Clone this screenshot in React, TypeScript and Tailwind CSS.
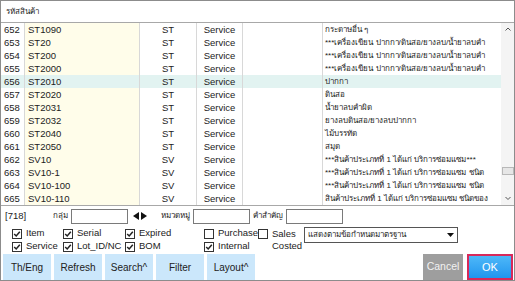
import React from 'react';

type Row = { no: string; code: string; cat: string; desc: string };

const rows: Row[] = [
  { no: '652', code: 'ST1090', cat: 'ST', desc: 'กระดาษอื่น ๆ' },
  { no: '653', code: 'ST20', cat: 'ST', desc: '***เครื่องเขียน ปากกา/ดินสอ/ยางลบ/น้ำยาลบคำ' },
  { no: '654', code: 'ST200', cat: 'ST', desc: '***เครื่องเขียน ปากกา/ดินสอ/ยางลบ/น้ำยาลบคำ' },
  { no: '655', code: 'ST2000', cat: 'ST', desc: '***เครื่องเขียน ปากกา/ดินสอ/ยางลบ/น้ำยาลบคำ' },
  { no: '656', code: 'ST2010', cat: 'ST', desc: 'ปากกา' },
  { no: '657', code: 'ST2020', cat: 'ST', desc: 'ดินสอ' },
  { no: '658', code: 'ST2031', cat: 'ST', desc: 'น้ำยาลบคำผิด' },
  { no: '659', code: 'ST2032', cat: 'ST', desc: 'ยางลบดินสอ/ยางลบปากกา' },
  { no: '660', code: 'ST2040', cat: 'ST', desc: 'ไม้บรรทัด' },
  { no: '661', code: 'ST2050', cat: 'ST', desc: 'สมุด' },
  { no: '662', code: 'SV10', cat: 'SV', desc: '***สินค้าประเภทที่ 1 ได้แก่  บริการซ่อมแซม***' },
  { no: '663', code: 'SV10-1', cat: 'SV', desc: '***สินค้าประเภทที่ 1 ได้แก่  บริการซ่อมแซม ชนิด' },
  { no: '664', code: 'SV10-100', cat: 'SV', desc: '***สินค้าประเภทที่ 1 ได้แก่  บริการซ่อมแซม ชนิด' },
  { no: '665', code: 'SV10-110', cat: 'SV', desc: 'สินค้าประเภทที่ 1 ได้แก่  บริการซ่อมแซม ชนิดของ' },
];

const Check = ({ on }: { on: boolean }) => (
  <svg width="10" height="10" viewBox="0 0 10 10" className="shrink-0">
    <rect x="0.5" y="0.5" width="9" height="9" fill="#fff" stroke="#333" />
    {on && <path d="M2.2 5 L4.2 7 L7.8 2.8" fill="none" stroke="#222" strokeWidth="1.5" />}
  </svg>
);

const Opt = ({ label, on, w }: { label: string; on: boolean; w: string }) => (
  <div className={`flex items-center gap-[4px] ${w}`}>
    <Check on={on} />
    <span>{label}</span>
  </div>
);

export default function App() {
  return (
    <div className="w-[515px] h-[281px] bg-white border border-[#8c8c8c] flex flex-col text-[9.5px] text-[#222] overflow-hidden" style={{ fontFamily: 'Tahoma, "Liberation Sans", "DejaVu Sans", sans-serif' }}>
      {/* header */}
      <div className="h-[22px] flex items-center px-[5px] border-b border-[#a8a8a8] text-[8px]">รหัสสินค้า</div>

      {/* grid */}
      <div className="h-[182px] flex">
        <div className="w-[500px]">
          {rows.map(r => (
            <div key={r.no} className={`h-[13px] flex leading-[13px] ${r.no === '656' ? 'bg-[#e2f3f1]' : ''}`}>
              <div className="w-[24px] pl-[3px] border-r border-[#d8d8d8]">{r.no}</div>
              <div className={`w-[115px] pl-[3px] border-r border-[#d8d8d8] ${r.no === '656' ? '' : 'bg-[#fffdea]'}`}>{r.code}</div>
              <div className="w-[57px] text-center border-r border-[#d8d8d8]">{r.cat}</div>
              <div className="w-[46px] text-center border-r border-[#d8d8d8]">Service</div>
              <div className="w-[80px] border-r border-[#d8d8d8]" />
              <div className="flex-1 pl-[2px] whitespace-nowrap overflow-hidden text-[8px]">{r.desc}</div>
            </div>
          ))}
        </div>
        <div className="flex-1 bg-[#f4f4f4] flex flex-col items-center text-[#555]">
          <svg width="8" height="13" viewBox="0 0 8 13"><path d="M1.5 7.5 L4 5 L6.5 7.5" fill="none" stroke="#555" strokeWidth="1" /></svg>
          <div className="flex-1" />
          <div className="w-[12px] h-[8px] bg-[#e6e6e6] border border-[#b8b8b8] mb-[17px]" />
          <svg width="8" height="13" viewBox="0 0 8 13"><path d="M1.5 5 L4 7.5 L6.5 5" fill="none" stroke="#555" strokeWidth="1" /></svg>
        </div>
      </div>

      {/* bottom panel */}
      <div className="flex-1 border-t border-[#a8a8a8] flex flex-col">
        <div className="h-[16px] mt-[2px] flex items-center">
          <span className="w-[52px] pl-[4px]">[718]</span>
          <span className="text-[8px] mr-[3px]">กลุ่ม</span>
          <div className="w-[57px] h-[15px] border border-[#7a7a7a] bg-white" />
          <div className="flex items-center gap-[2px] ml-[5px] w-[28px]">
            <svg width="6" height="8" viewBox="0 0 6 8"><path d="M6 0 L0 4 L6 8 Z" fill="#111" /></svg>
            <svg width="6" height="8" viewBox="0 0 6 8"><path d="M0 0 L6 4 L0 8 Z" fill="#111" /></svg>
          </div>
          <span className="text-[8px] mr-[3px]">หมวดหมู่</span>
          <div className="w-[57px] h-[15px] border border-[#7a7a7a] bg-white" />
          <span className="text-[8px] ml-[3px] mr-[3px]">คำสำคัญ</span>
          <div className="w-[57px] h-[15px] border border-[#7a7a7a] bg-white" />
        </div>

        <div className="flex mt-[4px]">
          <div className="flex flex-col pl-[11px] gap-[2px]">
            <div className="flex h-[11px] items-center">
              <Opt label="Item" on w="w-[51px]" />
              <Opt label="Serial" on w="w-[62px]" />
              <Opt label="Expired" on w="w-[79px]" />
              <Opt label="Purchase" on={false} w="w-[54px]" />
            </div>
            <div className="flex h-[11px] items-center">
              <Opt label="Service" on w="w-[51px]" />
              <Opt label="Lot_ID/NC" on w="w-[62px]" />
              <Opt label="BOM" on w="w-[79px]" />
              <Opt label="Internal" on w="w-[54px]" />
            </div>
          </div>
          <div className="flex gap-[4px]">
            <div className="pt-[1px]"><Check on={false} /></div>
            <div className="flex flex-col leading-[12px] w-[32px]">
              <span>Sales</span>
              <span>Costed</span>
            </div>
          </div>
          <div className="w-[154px] h-[16px] border border-[#555] bg-white flex items-center justify-between px-[3px] mt-[-1px]">
            <span className="text-[8px]">แสดงตามข้อกำหนดมาตรฐาน</span>
            <svg width="7" height="4" viewBox="0 0 7 4"><path d="M0 0 L7 0 L3.5 4 Z" fill="#111" /></svg>
          </div>
        </div>

        <div className="flex-1" />
        <div className="h-[26px] flex pl-[2px] gap-[3px] text-[10px]">
          {['Th/Eng', 'Refresh', 'Search^', 'Filter', 'Layout^'].map(b => (
            <div key={b} className="w-[48px] bg-[#cbe7fb] flex items-center justify-center">{b}</div>
          ))}
          <div className="flex-1" />
          <div className="w-[40px] bg-[#9e9e9e] text-[#f2f2f2] flex items-center justify-center text-[10.5px] mr-[1px]">Cancel</div>
          <div className="w-[46px] mr-[1px] border-2 border-[#d8295a] bg-gradient-to-b from-[#4db8f8] to-[#1f95ee] text-white flex items-center justify-center text-[11px]">OK</div>
        </div>
      </div>
    </div>
  );
}
